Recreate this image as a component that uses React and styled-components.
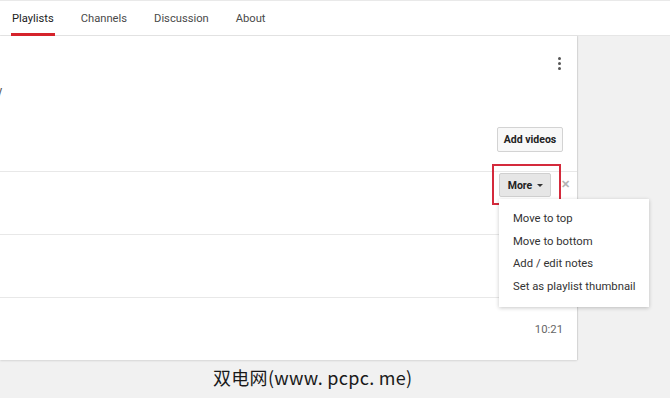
import React from "react";
import styled, { createGlobalStyle } from "styled-components";

const Global = createGlobalStyle`
  html, body { margin: 0; padding: 0; background: #f1f1f1; }
  body { font-family: Roboto, "Noto Sans", Arial, sans-serif; color: #333; }
  * { box-sizing: border-box; }
`;

const Page = styled.div`
  width: 670px;
  height: 398px;
  overflow: hidden;
  position: relative;
  border-top: 1px solid #e9e9e9;
  background: #f1f1f1;
`;

const NavBar = styled.nav`
  height: 35px;
  background: #fff;
  border-bottom: 1px solid #e6e6e6;
  display: flex;
  align-items: stretch;
  padding-left: 12px;
  gap: 27px;
`;

const Tab = styled.div`
  display: flex;
  align-items: center;
  font-size: 11.2px;
  color: ${(p) => (p.$active ? "#222" : "#4a4a4a")};
  position: relative;
  padding-top: 1px;
  ${(p) =>
    p.$active &&
    `&::after { content: ""; position: absolute; left: -1px; right: -1px; bottom: -1px; height: 3px; background: #d5232b; }`}
`;

const Body = styled.div`
  display: flex;
  align-items: flex-start;
`;

const Panel = styled.section`
  width: 577px;
  background: #fff;
  box-shadow: 1px 0 1px rgba(0, 0, 0, 0.08), 0 1px 2px rgba(0, 0, 0, 0.1);
  display: flex;
  flex-direction: column;
`;

const PanelHead = styled.div`
  height: 135px;
  display: grid;
  grid-template-columns: 1fr auto;
  grid-template-rows: auto auto 1fr;
  padding: 21px 14px 19px 0;
`;

const Description = styled.div`
  font-size: 12px;
  color: #555;
  margin-left: -3.5px;
  margin-top: 14px;
  grid-column: 1;
  grid-row: 2;
`;

const Kebab = styled.button`
  grid-column: 2;
  grid-row: 1;
  justify-self: end;
  border: 0;
  background: none;
  padding: 0 2px 0 0;
  display: flex;
  flex-direction: column;
  gap: 2px;
  cursor: pointer;
  span { width: 3px; height: 3px; background: #555; border-radius: 50%; display: block; }
`;

const ActionButton = styled.button`
  grid-column: 2;
  grid-row: 3;
  align-self: end;
  height: 25px;
  width: 66px;
  padding: 0;
  font-family: Roboto, Arial, sans-serif;
  font-size: 10.5px;
  font-weight: 700;
  color: #222;
  background: #f8f8f8;
  border: 1px solid #d3d3d3;
  border-radius: 2px;
`;

const Row = styled.div`
  height: 63px;
  border-top: 1px solid #e8e8e8;
  display: flex;
  justify-content: flex-end;
  align-items: ${(p) => (p.$align || "flex-start")};
  padding-right: ${(p) => p.$pr || "14px"};
  padding-top: ${(p) => p.$pt || "0"};
  gap: 10px;
`;

const MoreButton = styled.button`
  height: 24px;
  width: 52px;
  padding: 0 0 0 1px;
  display: flex;
  align-items: center;
  justify-content: center;
  gap: 5px;
  font-family: Roboto, Arial, sans-serif;
  font-size: 10.5px;
  font-weight: 700;
  color: #222;
  background: #e6e6e6;
  border: 1px solid #d0d0d0;
  border-radius: 2px;
`;

const Caret = styled.span`
  width: 0;
  height: 0;
  border-left: 3px solid transparent;
  border-right: 3px solid transparent;
  border-top: 3px solid #333;
  margin-top: 1px;
`;

const Close = styled.span`
  width: 8px;
  display: flex;
  justify-content: center;
  font-size: 11px;
  font-weight: 700;
  color: #b4b4b4;
  margin-top: 6px;
  line-height: 12px;
`;

const Duration = styled.span`
  font-size: 11.3px;
  color: #666;
`;

const Highlight = styled.div`
  position: absolute;
  left: 492px;
  top: 163px;
  width: 69px;
  height: 41px;
  border: 2px solid #d42a3c;
  pointer-events: none;
`;

const Menu = styled.ul`
  position: absolute;
  left: 499px;
  top: 198px;
  width: 150px;
  margin: 0;
  padding: 9px 0 9px;
  list-style: none;
  background: #fff;
  box-shadow: 0 1px 4px rgba(0, 0, 0, 0.22);
`;

const MenuItem = styled.li`
  height: 22.5px;
  line-height: 22.5px;
  padding-left: 14px;
  font-size: 11.3px;
  color: #333;
  white-space: nowrap;
`;

const Footer = styled.div`
  padding: 4px 0 0 213px;
  font-family: "Noto Sans CJK SC", "Noto Sans", sans-serif;
  font-size: 18px;
  line-height: 26px;
  color: #1a1a1a;
  letter-spacing: 0.3px;
`;

export default function App() {
  return (
    <>
      <Global />
      <Page>
        <NavBar>
          <Tab $active>Playlists</Tab>
          <Tab>Channels</Tab>
          <Tab>Discussion</Tab>
          <Tab>About</Tab>
        </NavBar>
        <Body>
          <Panel>
            <PanelHead>
              <Kebab aria-label="More actions">
                <span />
                <span />
                <span />
              </Kebab>
              <Description>y</Description>
              <ActionButton>Add videos</ActionButton>
            </PanelHead>
            <Row $pr="8px" $pt="1px">
              <MoreButton>
                More <Caret />
              </MoreButton>
              <Close>✕</Close>
            </Row>
            <Row />
            <Row $align="center" $pt="0">
              <Duration>10:21</Duration>
            </Row>
          </Panel>
        </Body>
        <Footer>双电网(www. pcpc. me)</Footer>
        <Highlight />
        <Menu>
          <MenuItem>Move to top</MenuItem>
          <MenuItem>Move to bottom</MenuItem>
          <MenuItem>Add / edit notes</MenuItem>
          <MenuItem>Set as playlist thumbnail</MenuItem>
        </Menu>
      </Page>
    </>
  );
}
